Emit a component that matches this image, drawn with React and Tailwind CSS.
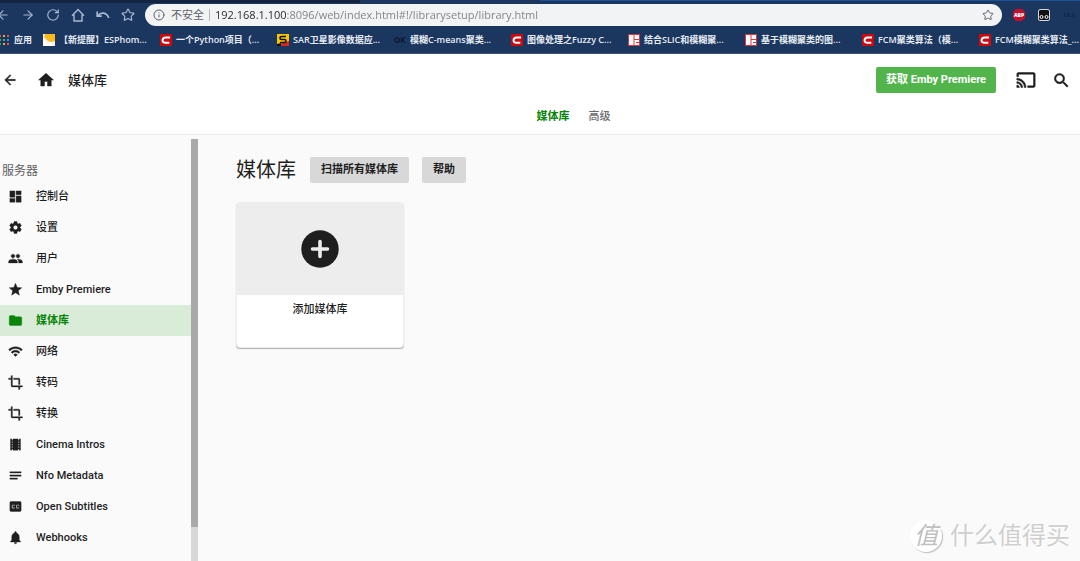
import {
  MdArrowBack,
  MdCast,
  MdClosedCaption,
  MdCrop,
  MdDashboard,
  MdFolder,
  MdHome,
  MdLocalMovies,
  MdNotes,
  MdNotifications,
  MdPeople,
  MdSearch,
  MdSettings,
  MdStar,
  MdWifi,
} from 'react-icons/md';
import { ArrowLeft, ArrowRight, Info, RotateCw, Star } from 'lucide-react';

const menu = [
  { label: '控制台', icon: MdDashboard },
  { label: '设置', icon: MdSettings },
  { label: '用户', icon: MdPeople },
  { label: 'Emby Premiere', icon: MdStar },
  { label: '媒体库', icon: MdFolder, active: true },
  { label: '网络', icon: MdWifi },
  { label: '转码', icon: MdCrop },
  { label: '转换', icon: MdCrop },
  { label: 'Cinema Intros', icon: MdLocalMovies },
  { label: 'Nfo Metadata', icon: MdNotes },
  { label: 'Open Subtitles', icon: MdClosedCaption },
  { label: 'Webhooks', icon: MdNotifications },
];

const HomeOutline = () => (
  <svg viewBox="0 0 14 14" className="w-[14px] h-[14px]" fill="none" stroke="currentColor" strokeWidth="1.400">
    <path d="M1 7.800L7 1.500l6 6.300M3 6.500V13h8V6.500" />
  </svg>
);

const UndoArrow = () => (
  <svg viewBox="0 0 14 14" className="w-[14px] h-[14px]" fill="none" stroke="currentColor" strokeWidth="1.700">
    <path d="M1.200 3.500v4.700h4.600M1.800 7.800C5 3.800 10.500 4 12.800 10" />
  </svg>
);

const CsdnIcon = () => (
  <svg viewBox="0 0 12 12" className="w-3 h-3 shrink-0">
    <rect width="12" height="12" fill="#c90b0f" />
    <path d="M10 3.400H5.600C3.600 3.400 2.800 4.600 2.600 6c-.2 1.600.5 2.700 2.300 2.700h4.400" fill="none" stroke="#fff" strokeWidth="2" />
  </svg>
);

const JianshuIcon = () => (
  <svg viewBox="0 0 12 12" className="w-3 h-3 shrink-0">
    <rect x=".5" y=".5" width="11" height="11" fill="#fff" stroke="#d9363e" />
    <path d="M6 1v10M6 5.500h5M8 8.500h3" stroke="#d9363e" strokeWidth="1" />
  </svg>
);

const MailIcon = () => (
  <svg viewBox="0 0 12 12" className="w-3 h-3 shrink-0">
    <rect width="12" height="12" fill="#f6f1e4" />
    <path d="M2 0h10v7L8 8 5 7 1 3z" fill="#f9b91f" />
    <path d="M0 5l5 4 3-1 2 4H0z" fill="#fff" />
  </svg>
);

const SarIcon = () => (
  <svg viewBox="0 0 12 12" className="w-3 h-3 shrink-0">
    <rect width="12" height="12" fill="#f7c600" />
    <path d="M5 9l7-2v5H3z" fill="#d8281c" />
    <path d="M9 2.500H4.500C2.500 2.500 2.500 5.500 4.500 5.500h3c2 0 2 3 0 3H3" fill="none" stroke="#111" strokeWidth="1.600" />
    <path d="M0 10l4-1v3H0z" fill="#111" />
  </svg>
);

const OkIcon = () => (
  <svg viewBox="0 0 12 12" className="w-3 h-3 shrink-0">
    <circle cx="3" cy="6" r="2.200" fill="none" stroke="#0d1b30" strokeWidth="1.300" />
    <path d="M7.500 3.300v5.400M11 3.300L8 6l3.200 2.700" fill="none" stroke="#0d1b30" strokeWidth="1.300" />
  </svg>
);

const AppsIcon = () => (
  <svg viewBox="0 0 10 12" className="w-[10px] h-3 shrink-0">
    <path d="M0 1h1v2H0zM7 9h2v2H7z" fill="#ef5350" />
    <path d="M3 1h2v2H3zM3 9h2v2H3z" fill="#e8a33d" />
    <path d="M7 1h2v2H7z" fill="#e5533d" />
    <path d="M0 5h1v2H0zM3 5h2v2H3z" fill="#4caf50" />
    <path d="M7 5h2v2H7z" fill="#4285f4" />
    <path d="M0 9h1v2H0z" fill="#34a853" />
  </svg>
);

const navButtons = [
  { label: '后退', icon: ArrowLeft },
  { label: '前进', icon: ArrowRight },
  { label: '刷新', icon: RotateCw },
  { label: '主页', icon: HomeOutline },
  { label: '撤销', icon: UndoArrow },
  { label: '收藏', icon: Star },
];

const bookmarks = [
  { label: '【新提醒】ESPhom...', icon: MailIcon },
  { label: '一个Python项目（...', icon: CsdnIcon },
  { label: 'SAR卫星影像数据应...', icon: SarIcon },
  { label: '模糊C-means聚类...', icon: OkIcon },
  { label: '图像处理之Fuzzy C...', icon: CsdnIcon },
  { label: '结合SLIC和模糊聚...', icon: JianshuIcon },
  { label: '基于模糊聚类的图...', icon: JianshuIcon },
  { label: 'FCM聚类算法（模...', icon: CsdnIcon },
  { label: 'FCM模糊聚类算法_...', icon: CsdnIcon },
];

const BrowserBar = () => (
  <div className="bg-[#1b365f] border-b border-[#3f5577] font-['Open_Sans','Noto_Sans_CJK_SC',sans-serif] overflow-hidden">
    <div className="flex h-[3px]">
      <div className="w-1/3 bg-[#122442]" />
      <div className="w-1/6" />
      <div className="flex-1 border-b-2 border-[#1b365f] bg-[#1c5299]" />
    </div>
    <div className="flex items-center h-6 pr-1">
      <div className="flex items-center gap-[11px] -ml-1 mr-[10px]">
        {navButtons.map(({ label, icon: Icon }) => (
          <button key={label} aria-label={label} className="text-[#a9b8d0]">
            <Icon size={14} />
          </button>
        ))}
      </div>
      <div className="flex flex-1 items-center h-[22px] rounded-full bg-[#f1f3f4] px-2 text-[11px] text-[#5f6368]">
        <Info size={12} className="mr-[6px]" />
        <span>不安全</span>
        <span className="w-px h-3 mx-[5px] bg-[#b5b8bb]" />
        <input
          aria-label="地址"
          defaultValue="192.168.1.100:8096/web/index.html#!/librarysetup/library.html"
          className="flex-1 min-w-0 outline-none bg-[linear-gradient(to_right,#26282b_71px,#7d8185_71px)] bg-clip-text text-transparent"
        />
        <button aria-label="为此页添加书签">
          <Star size={12} />
        </button>
      </div>
      <div className="flex items-center gap-3 ml-[10px]">
        <svg viewBox="0 0 14 14" className="w-[14px] h-[14px]">
          <path d="M4 1h6l3 3v6l-3 3H4l-3-3V4z" fill="#c70d2c" />
          <text x="7" y="9" textAnchor="middle" fontSize="5" fontWeight="800" fill="#fff">ABP</text>
        </svg>
        <svg viewBox="0 0 12 12" className="w-3 h-3">
          <rect x=".5" y=".5" width="11" height="11" rx="1.500" fill="#111" stroke="#d5d8dc" />
          <circle cx="3.500" cy="8" r="1.500" fill="#111" stroke="#fff" />
          <circle cx="8.500" cy="8" r="1.500" fill="#111" stroke="#fff" />
        </svg>
        <span className="font-['Liberation_Serif',serif] text-[7px] text-[#10203b]">TEX</span>
      </div>
    </div>
    <div className="flex items-center h-[26px] text-[9px] font-semibold text-[#e8edf5]">
      <a href="#apps" className="flex items-center gap-1 w-[43px] shrink-0">
        <AppsIcon />
        应用
      </a>
      {bookmarks.map(({ label, icon: Icon }) => (
        <a key={label} href="#bookmark" className="flex items-center gap-1 w-[117px] shrink-0 whitespace-nowrap">
          <Icon />
          {label}
        </a>
      ))}
    </div>
  </div>
);

// the thin stroke softens the corners; the icon's empty bounds path must stay unstroked
const SoftIcon = ({ icon: Icon, size }) => (
  <Icon size={size} strokeWidth={0.6} strokeLinejoin="round" className="[&>path[fill=none]]:stroke-none" />
);

const Header = () => (
  <header className="bg-white border-b border-[#ececec] h-[81px]">
    <div className="flex items-center h-[52px] px-[2px]">
      <button aria-label="返回">
        <SoftIcon icon={MdArrowBack} size={16} />
      </button>
      <button aria-label="首页" className="ml-[19px]">
        <SoftIcon icon={MdHome} size={18} />
      </button>
      <span className="ml-[13px] pt-px text-[13px] font-medium">媒体库</span>
      <button className="ml-auto h-[26px] w-[120px] pt-px rounded-xs bg-[#52b54b] text-[11px] font-bold text-white">
        获取 Emby Premiere
      </button>
      <button aria-label="投射" className="ml-5">
        <SoftIcon icon={MdCast} size={20} />
      </button>
      <button aria-label="搜索" className="ml-4 mr-[7px]">
        <SoftIcon icon={MdSearch} size={19} />
      </button>
    </div>
    <nav className="flex justify-center gap-[19px] pl-[67px] pt-[3px] text-[11px] leading-4">
      <a href="#library" className="font-bold text-[#0a840a]">媒体库</a>
      <a href="#advanced" className="font-medium text-[#6b6b6b]">高级</a>
    </nav>
  </header>
);

const Sidebar = () => (
  <aside className="flex w-[198px] shrink-0">
    <nav className="flex-1 pt-[26px]">
      <h2 className="pl-[2px] h-5 text-xs leading-5 text-[#5f5f5f]">服务器</h2>
      {menu.map(({ label, icon, active }) => (
        <a
          key={label}
          href="#menu"
          className={
            active
              ? 'flex items-center gap-[13px] h-[31px] pl-2 text-[11px] leading-[17px] font-bold bg-[#d9ecd8] text-[#0a840a]'
              : 'flex items-center gap-[13px] h-[31px] pl-2 text-[11px] leading-[17px] font-medium'
          }
        >
          <SoftIcon icon={icon} size={15} />
          {label}
        </a>
      ))}
    </nav>
    <div className="flex flex-col w-[7px] mt-1 bg-[#d7d7d7]">
      <div className="grow-[92] bg-[#a9a9a9]" />
      <div className="grow-[8]" />
    </div>
  </aside>
);

const Library = () => (
  <main className="flex-1 pl-[38px] pt-5">
    <div className="flex items-center">
      <h1 className="pt-px text-xl leading-7">媒体库</h1>
      <button className="ml-[14px] h-[26px] px-[11px] pt-px rounded-xs bg-[#d8d8d8] text-[11px] font-bold">
        扫描所有媒体库
      </button>
      <button className="ml-[13px] h-[26px] px-[11px] pt-px rounded-xs bg-[#d8d8d8] text-[11px] font-bold">
        帮助
      </button>
    </div>
    <button className="block w-[168px] mt-[18px] rounded-sm overflow-hidden bg-white border border-[#ededed] shadow-[0_1px_1px_rgba(0,0,0,0.3)]">
      <span className="flex items-center justify-center h-[92px] bg-[#ededed]">
        <svg viewBox="0 0 38 38" className="w-[38px] h-[38px]">
          <circle cx="19" cy="19" r="18.700" fill="#1f1f1f" />
          <path d="M19 11.500v15M11.500 19h15" stroke="#ededed" strokeWidth="3.600" strokeLinecap="round" />
        </svg>
      </span>
      <span className="block h-[52px] pt-[7px] text-[11px] leading-4 font-medium">添加媒体库</span>
    </button>
  </main>
);

const Watermark = () => (
  <div className="absolute right-[10px] bottom-[9px] flex items-center gap-2 text-[#cfcfcf] pointer-events-none [text-shadow:1px_1px_0_#fff]">
    <span className="flex items-center justify-center w-8 h-8 rounded-full bg-white text-[24px] leading-none italic text-[#c0c0c0] shadow-[1px_1px_1px_#bdbdbd]">
      值
    </span>
    <span className="text-[24px] leading-8">什么值得买</span>
  </div>
);

const App = () => (
  <div
    lang="zh-CN"
    className="relative flex flex-col min-h-screen bg-[#fafafa] text-[#1f1f1f] font-[Roboto,'Noto_Sans_CJK_SC',sans-serif]"
  >
    <BrowserBar />
    <Header />
    <div className="flex flex-1">
      <Sidebar />
      <Library />
    </div>
    <Watermark />
  </div>
);

export default App;
